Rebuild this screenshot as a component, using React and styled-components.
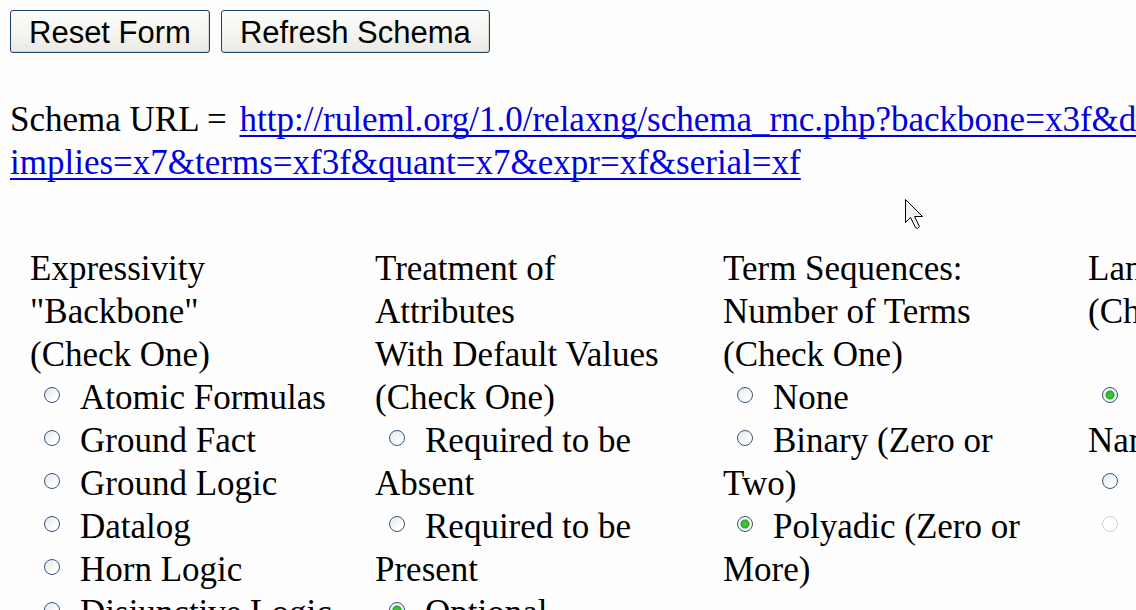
import React from "react";
import styled, { createGlobalStyle } from "styled-components";

const GlobalStyle = createGlobalStyle`
  body {
    margin: 0;
    background: #fefefe;
    color: #000;
    font-family: "Liberation Serif", "Times New Roman", serif;
    font-size: 35px;
    line-height: 43px;
    overflow: hidden;
  }
`;

const Page = styled.main`
  padding: 10px 0 0 10px;
`;

const Toolbar = styled.div`
  display: flex;
  gap: 11px;
`;

const Button = styled.button`
  height: 43px;
  padding: 2px 18px 0;
  border: 1px solid #1f3f66;
  border-radius: 3px;
  background: linear-gradient(#fdfdfc, #f3f3ef 60%, #eae9e3);
  box-shadow: inset -1px -1px 1px #d8d5cb;
  color: #000;
  font-family: "Liberation Sans", Arial, sans-serif;
  font-size: 31px;
  line-height: 39px;
  white-space: nowrap;
`;

const SchemaUrl = styled.p`
  margin: 45px 0 0;
  white-space: nowrap;
`;

const SchemaLabel = styled.span`
  margin-right: 4px;
`;

const SchemaLink = styled.a`
  color: #0000e0;
  text-decoration: underline;
  text-decoration-thickness: 2px;
  text-underline-offset: 4px;
  text-decoration-skip-ink: none;
`;

const Columns = styled.form`
  display: grid;
  grid-template-columns: 345px 348px 365px 1fr;
  margin: 63px 0 0 20px;
`;

const Group = styled.fieldset`
  min-width: 0;
  margin: 0;
  padding: 0;
  border: 0;
`;

const Legend = styled.legend`
  padding: 0;
  white-space: nowrap;
`;

const Option = styled.div`
  white-space: nowrap;
`;

const Radio = styled.input`
  appearance: none;
  box-sizing: border-box;
  width: 16px;
  height: 16px;
  margin: 0 20px 0 14px;
  border: 1px solid #35557c;
  border-radius: 50%;
  background: linear-gradient(135deg, #e4e6e8, #fff 75%);
  vertical-align: 6px;

  &:checked {
    background: radial-gradient(circle, #3fc13c 0 2px, #2ba52b 4px, #f4f6f4 5px);
  }

  &:disabled {
    border-color: #d2d0c6;
    background: #fff;
  }
`;

const Pointer = styled.svg`
  position: absolute;
  left: 904px;
  top: 198px;
  pointer-events: none;
`;

const groups = [
  {
    name: "backbone",
    title: ["Expressivity", '"Backbone"', "(Check One)"],
    options: [
      { lines: ["Atomic Formulas"] },
      { lines: ["Ground Fact"] },
      { lines: ["Ground Logic"] },
      { lines: ["Datalog"] },
      { lines: ["Horn Logic"] },
      { lines: ["Disjunctive Logic"] },
    ],
  },
  {
    name: "default",
    title: ["Treatment of", "Attributes", "With Default Values", "(Check One)"],
    options: [
      { lines: ["Required to be", "Absent"] },
      { lines: ["Required to be", "Present"] },
      { lines: ["Optional"], checked: true },
    ],
  },
  {
    name: "termseq",
    title: ["Term Sequences:", "Number of Terms", "(Check One)"],
    options: [
      { lines: ["None"] },
      { lines: ["Binary (Zero or", "Two)"] },
      { lines: ["Polyadic (Zero or", "More)"], checked: true },
    ],
  },
  {
    name: "lng",
    title: ["Language", "(Check One)", "\u00a0"],
    options: [
      { lines: ["", "Names"], checked: true },
      { lines: [""], label: "Second language" },
      { lines: [""], label: "Third language", disabled: true },
    ],
  },
];

function Lines({ lines }) {
  return lines.map((line, i) => (
    <React.Fragment key={i}>
      {i > 0 && <br />}
      {line}
    </React.Fragment>
  ));
}

function OptionGroup({ name, title, options }) {
  return (
    <Group>
      <Legend>
        <Lines lines={title} />
      </Legend>
      {options.map((option, i) => (
        <Option key={i}>
          <Radio
            type="radio"
            name={name}
            id={`${name}-${i}`}
            aria-label={option.label}
            defaultChecked={option.checked}
            disabled={option.disabled}
          />
          <label htmlFor={`${name}-${i}`}>
            <Lines lines={option.lines} />
          </label>
        </Option>
      ))}
    </Group>
  );
}

export default function App() {
  return (
    <>
      <GlobalStyle />
      <Page>
        <Toolbar>
          <Button type="reset" form="schema-form">Reset Form</Button>
          <Button type="button">Refresh Schema</Button>
        </Toolbar>
        <SchemaUrl>
          <SchemaLabel>Schema URL =</SchemaLabel>{" "}
          <SchemaLink href="#schema">
            http://ruleml.org/1.0/relaxng/schema_rnc.php?backbone=x3f&amp;d
            <br />
            implies=x7&amp;terms=xf3f&amp;quant=x7&amp;expr=xf&amp;serial=xf
          </SchemaLink>
        </SchemaUrl>
        <Columns id="schema-form">
          {groups.map((group) => (
            <OptionGroup key={group.name} {...group} />
          ))}
        </Columns>
      </Page>
      <Pointer width="20" height="32" viewBox="0 0 20 32" aria-hidden="true">
        <path
          d="M1.5 1.5V24.5L6.5 19.5L11.5 29.5L13.5 30.5L15.5 28.5L10.5 18.5H18.5Z"
          fill="#f2f2f2"
          stroke="#000"
          strokeWidth="1"
        />
      </Pointer>
    </>
  );
}
